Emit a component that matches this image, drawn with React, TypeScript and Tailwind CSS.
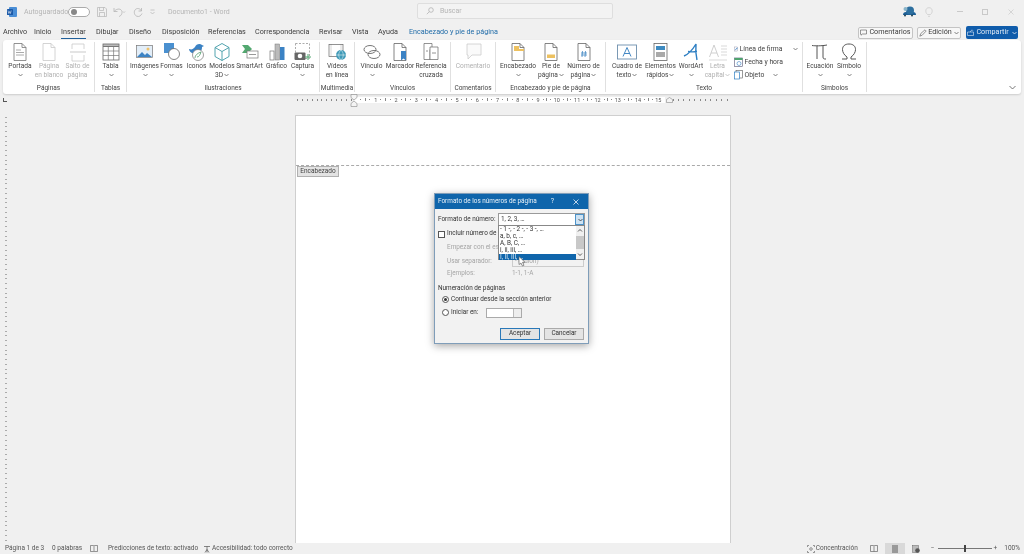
import React from "react";

type BtnProps = { w: number; icon: React.ReactNode; lines: string[]; chev?: boolean; inlineChev?: boolean; off?: boolean };

const Chev = ({ c = "#666" }: { c?: string }) => (
  <svg width="5" height="4" viewBox="0 0 5 4" className="inline-block ml-[1px] align-middle"><path d="M.5 1 2.500 3 4.500 1" fill="none" stroke={c} strokeWidth=".8" /></svg>
);

const Ic = ({ children, w = 20 }: { children: React.ReactNode; w?: number }) => (
  <svg width={w} height="20" viewBox={`0 0 ${w} 20`} fill="none">{children}</svg>
);

const Doc = ({ c = "#777" }: { c?: string }) => <path d="M4 1.500h8l4 4v13H4zM12 1.500v4h4" stroke={c} strokeWidth=".8" fill="#fff" />;

const icons = {
  portada: <Ic><Doc c="#777" /><path d="M6 8h5M6 10.500h8M6 13h8" stroke="#aaa" strokeWidth="1" /></Ic>,
  blanco: <Ic><Doc c="#c9c9c9" /></Ic>,
  salto: <Ic><path d="M4 7V2h12v5M4 13v6h12v-6" stroke="#c9c9c9" strokeWidth=".8" /><path d="M2 10h16" stroke="#c9c9c9" strokeWidth="1" /></Ic>,
  tabla: <Ic><rect x="2" y="2" width="16" height="16" fill="#fff" stroke="#666" strokeWidth=".8" /><path d="M2 3h16M2 4.500h16" stroke="#777" strokeWidth="1.200" /><path d="M2 9h16M2 13.500h16M7.300 4v14M12.600 4v14" stroke="#777" strokeWidth=".7" /></Ic>,
  imagen: <Ic><rect x="1.500" y="3.500" width="16" height="12" fill="#e3eef8" stroke="#777" strokeWidth=".7" /><path d="M2 15l5-5 3 3 2-2 5 4z" fill="#3c83c4" /><circle cx="13" cy="7" r="1.500" fill="#f0c26a" /></Ic>,
  formas: <Ic><rect x="2" y="1" width="10" height="10" fill="#4a90d0" /><circle cx="12" cy="12" r="5.500" fill="#fff" stroke="#666" strokeWidth=".8" /></Ic>,
  iconos: <Ic><path d="M2 7c3 1 4 0 6-2 1-3 5-4 7-2l2 1-2 1c0 4-2 6-5 7-4 0-8-2-8-5z" fill="#3b82c4" /><circle cx="11" cy="13" r="5.500" fill="#fff" stroke="#777" strokeWidth=".7" /><path d="M8 16c0-3 3-5 6-6-1 3-2 5-4 5" stroke="#4f9d6c" strokeWidth=".8" /></Ic>,
  modelos: <Ic><path d="M10 1.500 17 5.500v9l-7 4-7-4v-9zM3 5.500l7 4 7-4M10 9.500v9" stroke="#3f9aa6" strokeWidth=".9" /></Ic>,
  smartart: <Ic><path d="M2 3h6l4 4-4 4H2l3-4z" fill="#53a870" /><rect x="7" y="9" width="11" height="7" fill="#fff" stroke="#777" strokeWidth=".7" /><path d="M9 12.500h7" stroke="#999" /></Ic>,
  grafico: <Ic><rect x="3" y="9" width="4" height="9" fill="#fff" stroke="#777" strokeWidth=".7" /><rect x="8" y="2" width="4.500" height="16" fill="#bbb" stroke="#777" strokeWidth=".5" /><rect x="13" y="5" width="4.500" height="13" fill="#3b82c4" /></Ic>,
  captura: <Ic><rect x="2.500" y="1.500" width="14" height="15" stroke="#888" strokeWidth=".7" strokeDasharray="2 1.500" /><rect x="1.500" y="10.500" width="11" height="7.500" rx="1" fill="#666" /><circle cx="7" cy="14" r="2.300" fill="#fff" /><path d="M15 12v6M12 15h6" stroke="#4fa56e" strokeWidth="1" /></Ic>,
  video: <Ic><rect x="2" y="2.500" width="14" height="12" fill="#fff" stroke="#666" strokeWidth=".7" /><path d="M4 2.500v12M14 2.500v12" stroke="#666" strokeWidth=".5" strokeDasharray="1 1" /><circle cx="14" cy="13" r="5" fill="#3f9ab8" /><path d="M9 13h10M14 8c-3 3-3 7 0 10M14 8c3 3 3 7 0 10" stroke="#fff" strokeWidth=".5" /></Ic>,
  vinculo: <Ic><ellipse cx="8" cy="7.500" rx="6" ry="4" stroke="#666" strokeWidth=".9" /><ellipse cx="12" cy="12.500" rx="6" ry="4" stroke="#666" strokeWidth=".9" /></Ic>,
  marcador: <Ic><Doc c="#666" /><path d="M11 9h5v9.500l-2.500-2-2.500 2z" fill="#3b82c4" /></Ic>,
  referencia: <Ic><path d="M3 1.500h8v6H9v10H3z" fill="#fff" stroke="#666" strokeWidth=".7" /><path d="M9 5h8v12.500H9z" fill="#fff" stroke="#666" strokeWidth=".7" /><path d="M11 11h4M5 9h2" stroke="#777" strokeWidth=".8" /></Ic>,
  comentario: <Ic><path d="M4 2h14v11H9l-4 4v-4H4z" fill="#fafafa" stroke="#ccc" strokeWidth=".8" /></Ic>,
  encabezado: <Ic><Doc c="#666" /><path d="M6 4h5v3h5v2H6z" fill="#edc160" /></Ic>,
  pie: <Ic><Doc c="#666" /><rect x="6" y="12.500" width="8" height="3.500" fill="#edc160" /></Ic>,
  numero: <Ic><Doc c="#666" /><path d="M8.500 9 8 15M11.500 9 11 15M7 11h6M7 13h6" stroke="#2f7bbd" strokeWidth=".7" /></Ic>,
  cuadro: <Ic w={24}><rect x="2.500" y="3" width="19" height="14" fill="#fff" stroke="#6d8fad" strokeWidth=".9" /><path d="M8 14.500 12 5.500l4 9M9.300 11.500h5.400" stroke="#2f7bbd" strokeWidth=".9" /></Ic>,
  elementos: <Ic><rect x="3" y="1.500" width="13" height="17" fill="#fff" stroke="#666" strokeWidth=".8" /><rect x="5" y="4" width="9" height="4" fill="#3d8ac0" /><rect x="5" y="10" width="9" height="5" fill="#a9a9a9" /></Ic>,
  wordart: <Ic><path d="M3 14C8 12 12 7 15 2c-.5 5-.5 10 1 16M7 9.500c3 .5 6 .5 9 0" stroke="#2e7fc3" strokeWidth="1.400" /></Ic>,
  letra: <Ic><path d="M1.500 15 6 3l4.500 12M3 11h6" stroke="#c9c9c9" strokeWidth=".9" /><path d="M13 4h6M13 7h6M13 10h6M13 13h6" stroke="#c9c9c9" strokeWidth=".7" /><path d="M1 18h18" stroke="#c9c9c9" strokeWidth=".7" /></Ic>,
  pi: <Ic w={18}><path d="M1 3.500c3 .5 10 .5 15-.5M6 3.500V17M12 3.500V15c0 2 1 2 3 2" stroke="#555" strokeWidth="1" /></Ic>,
  omega: <Ic w={18}><path d="M2 17h5v-2C4 13 2.500 10 2.500 7.500 2.500 4 5 2 9 2s6.500 2 6.500 5.500c0 2.500-1.500 5.500-4.500 7.500v2h5" stroke="#555" strokeWidth="1" /></Ic>,
};

const Btn = ({ w, icon, lines, chev, inlineChev, off }: BtnProps) => (
  <div className={`flex flex-col items-center shrink-0 ${off ? "text-[#b0b0b0]" : "text-[#444444]"}`} style={{ width: w }}>
    <div className="h-[20px] flex items-center justify-center">{icon}</div>
    <div className="text-[6.600px] leading-[8.700px] text-center whitespace-nowrap">
      {lines.map((l, i) => (
        <div key={i}>{l}{inlineChev && i === lines.length - 1 && <Chev c={off ? "#bbb" : "#666"} />}</div>
      ))}
      {chev && <div className="h-[8.700px] flex items-center justify-center"><Chev /></div>}
    </div>
  </div>
);

const Group = ({ w, label, children }: { w: number; label: string; children: React.ReactNode }) => (
  <div className="h-[50px] mt-[2px] flex flex-col shrink-0 border-r border-[#e0e0e0]" style={{ width: w }}>
    <div className="h-[39px] flex justify-center">{children}</div>
    <div className="h-[11px] text-center text-[6.500px] leading-[15px] text-[#444] whitespace-nowrap">{label}</div>
  </div>
);

const tabs: [string, number][] = [["Archivo", 31], ["Inicio", 27], ["Insertar", 35], ["Dibujar", 33], ["Diseño", 33], ["Disposición", 46], ["Referencias", 47], ["Correspondencia", 64], ["Revisar", 33], ["Vista", 26], ["Ayuda", 31]];

const SmallRow = ({ icon, label, chevGap }: { icon: React.ReactNode; label: string; chevGap?: number }) => (
  <div className="flex items-center gap-[2px] h-[14px] text-[6.800px] text-[#444444] whitespace-nowrap">
    {icon}<span>{label}</span>
    {chevGap !== undefined && <span style={{ marginLeft: chevGap }}><Chev /></span>}
  </div>
);

const Ticks = ({ n, w }: { n: number; w: number }) => (
  <div className="h-[6px] relative bottom-[5px] flex items-center justify-around" style={{ width: w }}>
    {Array.from({ length: n }).map((_, i) => <span key={i} className="w-[1px] h-[2px] bg-[#888]" />)}
  </div>
);

const Ruler = () => (
  <div className="h-[21px] shrink-0 flex items-center relative">
    <div className="absolute left-[3px] top-[4px] w-[4px] h-[4px] border-l border-b border-[#555]" />
    <div className="ml-[295px]"><Ticks n={12} w={59} /></div>
    <div className="w-[311px] h-[6px] bg-white relative bottom-[5px] flex overflow-hidden pl-[3px]">
      {Array.from({ length: 15 }).map((_, i) => (
        <div key={i} className="w-[20.300px] shrink-0 flex items-center justify-between pl-[3px] text-[5.500px] leading-[6px] text-[#555]">
          <span className="w-[1px] h-[1px] bg-[#888]" /><span className="w-[1px] h-[3px] bg-[#888]" /><span className="w-[1px] h-[1px] bg-[#888]" /><span>{i + 1}</span>
        </div>
      ))}
    </div>
    <Ticks n={12} w={65} />
    <svg width="8" height="13" viewBox="0 0 8 13" className="absolute left-[350px] top-0"><path d="M1 .5h6v3L4 6 1 3.500zM1 12.500h6V9.500L4 7 1 9.500z" fill="#f4f4f4" stroke="#888" strokeWidth=".6" /></svg>
    <svg width="7" height="6" viewBox="0 0 7 6" className="absolute left-[666px] top-[3px]"><path d="M.5 5.500h6v-3L3.500.5.5 2.500z" fill="#f4f4f4" stroke="#888" strokeWidth=".6" /></svg>
  </div>
);

const Dialog = () => (
  <div className="absolute left-[434px] top-[193px] w-[155px] h-[151px] bg-[#f2f2f2] border border-[#7f9db9] shadow-[0_2px_8px_rgba(0,0,0,0.35)] text-[6.400px] text-[#333] whitespace-nowrap">
    <div className="h-[15px] bg-[#0f65ab] text-[#e8f1f8] flex items-center pl-[3px] pr-[9px]">
      <span className="flex-1">Formato de los números de página</span>
      <span className="mr-[19px] text-[7px]">?</span>
      <svg width="6" height="6" viewBox="0 0 6 6"><path d="M.5.5l5 5M5.500.5l-5 5" stroke="#e8f1f8" strokeWidth=".8" /></svg>
    </div>
    <div className="relative px-[3px] pt-[4px]">
      <div className="flex items-center h-[13px]">
        <span className="w-[60px]">Formato de número:</span>
        <div className="w-[87px] h-[13px] bg-white border border-[#9a9a9a] flex items-center pl-[2px] justify-between">
          <span>1, 2, 3, …</span>
          <span className="w-[9px] h-[11px] bg-[#cfe3f3] border border-[#4d93c9] flex items-center justify-center"><Chev c="#333" /></span>
        </div>
      </div>
      <div className="flex items-center gap-[2px] h-[12px] mt-[2px]">
        <span className="w-[7px] h-[7px] bg-white border border-[#555]" />
        <span>Incluir número de</span>
      </div>
      <div className="pl-[9px] text-[#a5a5a5]">
        <div className="h-[14px] mt-[1px] flex items-center">Empezar con el est</div>
        <div className="h-[13px] flex items-center">
          <span className="w-[65px] shrink-0">Usar separador:</span>
          <span className="w-[72px] h-[10px] border border-[#ccc] pl-[2px] flex items-center">- (guión)</span>
        </div>
        <div className="h-[11px] flex items-center">
          <span className="w-[65px] shrink-0">Ejemplos:</span><span>1-1, 1-A</span>
        </div>
      </div>
      <div className="mt-[5px] h-[9px] flex items-center">Numeración de páginas</div>
      <div className="flex items-center gap-[2px] h-[11px] mt-[1px] pl-[4px]">
        <span className="w-[7px] h-[7px] rounded-full bg-white border border-[#555] flex items-center justify-center"><span className="w-[3px] h-[3px] rounded-full bg-[#333]" /></span>
        <span>Continuar desde la sección anterior</span>
      </div>
      <div className="flex items-center gap-[2px] h-[11px] mt-[2px] pl-[4px]">
        <span className="w-[7px] h-[7px] rounded-full bg-white border border-[#555]" />
        <span className="w-[33px]">Iniciar en:</span>
        <span className="w-[36px] h-[10px] bg-white border border-[#aaa] flex justify-end"><span className="w-[8px] h-full bg-[#eee] border-l border-[#bbb]" /></span>
      </div>
      <div className="flex justify-end gap-[4px] mt-[10px] pr-[1px]">
        <span className="w-[40px] h-[12px] bg-[#e4e4e4] border-[1.500px] border-[#2a78b8] flex items-center justify-center">Aceptar</span>
        <span className="w-[40px] h-[12px] bg-[#e4e4e4] border border-[#aaa] flex items-center justify-center">Cancelar</span>
      </div>
      <div className="absolute left-[63px] top-[16px] w-[87px] h-[35px] bg-white border border-[#888]">
        <div className="pl-[1px] h-[7px] leading-[7px]">- 1 -, - 2 -, - 3 -, …</div>
        <div className="pl-[1px] h-[7px] leading-[7px]">a, b, c, …</div>
        <div className="pl-[1px] h-[7px] leading-[7px]">A, B, C, …</div>
        <div className="pl-[1px] h-[7px] leading-[7px]">i, ii, iii, …</div>
        <div className="pl-[1px] h-[6px] leading-[6px] bg-[#0f65ab] text-[#dbe8f3] w-[77px]">I, II, III, …</div>
        <div className="absolute right-0 top-0 bottom-0 w-[8px] bg-[#f0f0f0] flex flex-col items-center">
          <svg width="6" height="5" viewBox="0 0 6 5" className="mt-[2px]"><path d="M1 3.500 3 1.500 5 3.500" fill="none" stroke="#333" strokeWidth=".8" /></svg>
          <span className="w-full h-[13px] mt-[3px] bg-[#c8c8c8]" />
          <svg width="6" height="5" viewBox="0 0 6 5" className="mt-[3px]"><path d="M1 1.500 3 3.500 5 1.500" fill="none" stroke="#333" strokeWidth=".8" /></svg>
        </div>
      </div>
      <svg width="8" height="11" viewBox="0 0 8 11" className="absolute left-[83px] top-[47px]"><path d="M1 .5v8l2-1.500 1.500 3 1.500-.7-1.500-3H7z" fill="#fff" stroke="#555" strokeWidth=".6" /></svg>
    </div>
  </div>
);

export default function App() {
  return (
    <div className="relative w-[1024px] h-[554px] overflow-hidden bg-[#f0f0f0] flex flex-col blur-[0.4px]" style={{ fontFamily: 'Roboto,"Noto Sans",sans-serif' }}>
      {/* Title bar */}
      <div className="h-[24px] shrink-0 flex items-center relative text-[7px] text-[#b5b5b5]">
        <svg width="10" height="10" viewBox="0 0 10 10" className="ml-[7px]"><rect x="2" y="0" width="8" height="10" rx="1" fill="#4a8ed6" /><rect y="2" width="6" height="6" rx=".6" fill="#1c5aa8" /><path d="M1 3.500l.8 3 .8-2 .8 2 .8-3" stroke="#fff" strokeWidth=".5" fill="none" /></svg>
        <span className="ml-[7px] w-[44px]">Autoguardado</span>
        <span className="w-[22px] h-[10px] rounded-full border border-[#aaa] bg-white flex items-center pl-[2px]"><span className="w-[6px] h-[6px] rounded-full bg-[#888]" /></span>
        <svg width="10" height="10" viewBox="0 0 10 10" className="ml-[7px]"><path d="M.5.5h7.500l1.500 1.500v7.500H.5zM2.500.5v3h4v-3M2.500 9.500v-4h5v4" fill="none" stroke="#b5b5b5" strokeWidth=".7" /></svg>
        <svg width="13" height="10" viewBox="0 0 13 10" className="ml-[6px]"><path d="M1 1v3.500h3.500M1 4.500C3 2 7 1 8.500 3.500 10 6 8 9 6 9.500M10 4.500l1 1 1-1" fill="none" stroke="#b5b5b5" strokeWidth=".8" /></svg>
        <svg width="10" height="10" viewBox="0 0 10 10" className="ml-[7px]"><path d="M8.500 1v3h-3M8.500 4C7 1 3.500.8 2 3S1.500 8.500 4 9.300 8 8.500 9 6.500" fill="none" stroke="#b5b5b5" strokeWidth=".8" /></svg>
        <svg width="5" height="6" viewBox="0 0 5 6" className="ml-[7px]"><path d="M.5 1h4M.5 3 2.500 5 4.500 3" fill="none" stroke="#b5b5b5" strokeWidth=".7" /></svg>
        <span className="ml-[13px]">Documento1 - Word</span>
        <div className="absolute left-[417px] top-[3px] w-[196px] h-[16px] bg-[#f3f3f3] border border-[#dedede] rounded-[2px] flex items-center pl-[8px] gap-[6px]">
          <svg width="8" height="8" viewBox="0 0 8 8"><circle cx="5" cy="3" r="2.300" fill="none" stroke="#aaa" strokeWidth=".7" /><path d="M3.300 4.700.8 7.200" stroke="#aaa" strokeWidth=".7" /></svg>
          <span>Buscar</span>
        </div>
        <div className="absolute right-[10px] top-[6px] flex items-center">
          <svg width="14" height="11" viewBox="0 0 14 11"><path d="M1 9c0-2 1-3 3-3h7c2 0 3 1 3 3z" fill="#1d5f96" /><circle cx="8" cy="4.500" r="4" fill="#2d6f9f" /><circle cx="3.500" cy="3" r="2" fill="#8ab4c9" /><circle cx="3" cy="9.500" r="1" fill="#245" /><circle cx="10" cy="9.500" r="1" fill="#245" /></svg>
          <svg width="8" height="10" viewBox="0 0 8 10" className="ml-[9px]"><path d="M2.500 7.500C1.500 6.500.8 5.500.8 4 .8 2 2 .7 4 .7S7.200 2 7.200 4c0 1.500-.7 2.500-1.700 3.500zM3 9.300h2" fill="none" stroke="#c9c9c9" strokeWidth=".7" /></svg>
          <span className="ml-[24px] w-[6px] h-[1px] bg-[#c9c9c9]" />
          <span className="ml-[19px] w-[6px] h-[6px] border border-[#c9c9c9]" />
          <svg width="6" height="6" viewBox="0 0 6 6" className="ml-[20px]"><path d="M.5.5l5 5M5.500.5l-5 5" stroke="#c9c9c9" strokeWidth=".7" /></svg>
        </div>
      </div>

      {/* Tabs */}
      <div className="h-[16px] shrink-0 relative flex items-center pl-[3px] text-[7.200px] text-[#3c3c3c] pt-[1px]">
        {tabs.map(([t, w]) => (
          <span key={t} className="relative whitespace-nowrap shrink-0" style={{ width: w }}>
            <span className="relative inline-block">
              {t}
              {t === "Insertar" && <span className="absolute left-0 right-0 bottom-[-1px] h-[1px] bg-[#1f5f9a]" />}
            </span>
          </span>
        ))}
        <span className="text-[#1f6ba8] whitespace-nowrap">Encabezado y pie de página</span>
        <div className="absolute right-[6px] top-[2px] flex items-center gap-[4px] text-[7.200px]">
          <span className="w-[55px] h-[12px] bg-[#f7f7f7] border border-[#c4c4c4] rounded-[2px] flex items-center justify-center gap-[2px]">
            <svg width="7" height="7" viewBox="0 0 7 7"><path d="M.5 1h6v4H2.500L1 6.200V5H.5z" fill="none" stroke="#555" strokeWidth=".6" /></svg>Comentarios
          </span>
          <span className="w-[44px] h-[12px] bg-[#f7f7f7] border border-[#c4c4c4] rounded-[2px] flex items-center justify-center gap-[1px]">
            <svg width="8" height="8" viewBox="0 0 8 8"><path d="M.8 7.200l1-2.700L6 .8l1.200 1.200-4 4.200z" fill="none" stroke="#555" strokeWidth=".6" /></svg>Edición<Chev />
          </span>
          <span className="ml-[1px] w-[52px] h-[13px] bg-[#0f5cab] text-[#dfeaf5] rounded-[2px] flex items-center justify-center gap-[2px]">
            <svg width="7" height="7" viewBox="0 0 7 7"><path d="M.5 3h6v3.500h-6zM3 3 5 .8l1 1" fill="none" stroke="#dfeaf5" strokeWidth=".6" /></svg>Compartir<Chev c="#dfeaf5" />
          </span>
        </div>
      </div>

      {/* Ribbon */}
      <div className="mx-[3px] h-[54px] shrink-0 bg-white rounded-[3px] shadow-[0_1px_2px_rgba(0,0,0,0.15)] flex relative">
        <Group w={92} label="Páginas">
          <Btn w={29} icon={icons.portada} lines={["Portada"]} chev />
          <Btn w={29} icon={icons.blanco} lines={["Página", "en blanco"]} off />
          <Btn w={28} icon={icons.salto} lines={["Salto de", "página"]} off />
        </Group>
        <Group w={32} label="Tablas"><Btn w={28} icon={icons.tabla} lines={["Tabla"]} chev /></Group>
        <Group w={193} label="Ilustraciones">
          <Btn w={28} icon={icons.imagen} lines={["Imágenes"]} chev />
          <Btn w={26} icon={icons.formas} lines={["Formas"]} chev />
          <Btn w={24} icon={icons.iconos} lines={["Iconos"]} />
          <Btn w={27} icon={icons.modelos} lines={["Modelos", "3D"]} inlineChev />
          <Btn w={28} icon={icons.smartart} lines={["SmartArt"]} />
          <Btn w={26} icon={icons.grafico} lines={["Gráfico"]} />
          <Btn w={26} icon={icons.captura} lines={["Captura"]} chev />
        </Group>
        <Group w={35} label="Multimedia"><Btn w={30} icon={icons.video} lines={["Vídeos", "en línea"]} /></Group>
        <Group w={96} label="Vínculos">
          <Btn w={27} icon={icons.vinculo} lines={["Vínculo"]} chev />
          <Btn w={30} icon={icons.marcador} lines={["Marcador"]} />
          <Btn w={32} icon={icons.referencia} lines={["Referencia", "cruzada"]} />
        </Group>
        <Group w={45} label="Comentarios"><Btn w={36} icon={icons.comentario} lines={["Comentario"]} off /></Group>
        <Group w={110} label="Encabezado y pie de página">
          <Btn w={32} icon={icons.encabezado} lines={["Encabezado"]} chev />
          <Btn w={34} icon={icons.pie} lines={["Pie de", "página"]} inlineChev />
          <Btn w={31} icon={icons.numero} lines={["Número de", "página"]} inlineChev />
        </Group>
        <Group w={197} label="Texto">
          <Btn w={33} icon={icons.cuadro} lines={["Cuadro de", "texto"]} inlineChev />
          <Btn w={34} icon={icons.elementos} lines={["Elementos", "rápidos"]} inlineChev />
          <Btn w={27} icon={icons.wordart} lines={["WordArt"]} chev />
          <Btn w={26} icon={icons.letra} lines={["Letra", "capital"]} inlineChev off />
          <div className="w-[67px] shrink-0 pl-[3px] pt-[1px] flex flex-col">
            <SmallRow label="Línea de firma" chevGap={7} icon={<svg width="9" height="10" viewBox="0 0 9 10"><rect x=".5" y=".5" width="7" height="9" fill="#fff" stroke="#557" strokeWidth=".6" /><path d="M2 7 7 1.500 8.500 3 3 8z" fill="#3b82c4" /></svg>} />
            <SmallRow label="Fecha y hora" icon={<svg width="9" height="10" viewBox="0 0 9 10"><rect x=".5" y="1" width="8" height="8.500" fill="#fff" stroke="#557" strokeWidth=".6" /><rect x=".5" y="1" width="8" height="2" fill="#4fa56e" /><circle cx="5" cy="6.500" r="2" fill="none" stroke="#3b82c4" strokeWidth=".6" /></svg>} />
            <SmallRow label="Objeto" chevGap={6} icon={<svg width="9" height="10" viewBox="0 0 9 10"><rect x="2" y=".5" width="6.500" height="7.500" fill="#fff" stroke="#555" strokeWidth=".6" /><rect x=".5" y="2" width="5" height="7" fill="#fff" stroke="#2e7fc3" strokeWidth=".7" /></svg>} />
          </div>
        </Group>
        <Group w={64} label="Símbolos">
          <Btn w={29} icon={icons.pi} lines={["Ecuación"]} chev />
          <Btn w={29} icon={icons.omega} lines={["Símbolo"]} chev />
        </Group>
        <svg width="7" height="5" viewBox="0 0 7 5" className="absolute right-[5px] bottom-[4px]"><path d="M.5 1 3.500 4 6.500 1" fill="none" stroke="#555" strokeWidth=".8" /></svg>
      </div>

      <Ruler />

      {/* Document area */}
      <div className="flex-1 min-h-0 flex relative">
        <div className="absolute left-[5px] top-0 bottom-0 w-[2px] flex flex-col justify-around">
          {Array.from({ length: 90 }).map((_, i) => <span key={i} className="h-[1px] w-[2px] bg-[#aaa]" />)}
        </div>
        <div className="ml-[295px] w-[436px] h-full bg-white border-x border-t border-[#cfcfcf] relative">
          <div className="mt-[49px] border-t border-dashed border-[#aaaaaa]" />
          <div className="ml-[1px] w-[42px] h-[11px] bg-[#e3e3e3] border border-[#b0b0b0] text-[6.500px] text-[#444] flex items-center justify-center">Encabezado</div>
        </div>
      </div>

      {/* Status bar */}
      <div className="h-[11px] shrink-0 flex items-center relative text-[6.500px] text-[#555] bg-[#f0f0f0]">
        <span className="ml-[5px] w-[47px]">Página 1 de 3</span>
        <span className="w-[38px]">0 palabras</span>
        <svg width="8" height="7" viewBox="0 0 8 7"><path d="M.5.5h3l.5.5.5-.5h3v6h-3L4 7l-.5-.5h-3zM4 1v5.500" fill="none" stroke="#555" strokeWidth=".6" /></svg>
        <span className="ml-[10px] w-[95px]">Predicciones de texto: activado</span>
        <svg width="8" height="8" viewBox="0 0 8 8"><path d="M1 1.500h6M4 1.500v6M2 7.500l2-3 2 3" fill="none" stroke="#555" strokeWidth=".7" /></svg>
        <span className="ml-[1px]">Accesibilidad: todo correcto</span>
        <div className="absolute right-[4px] top-0 h-full flex items-center">
          <svg width="8" height="8" viewBox="0 0 8 8"><path d="M.5 2V.5H2M6 .5h1.500V2M.5 6v1.500H2M6 7.500h1.500V6" fill="none" stroke="#555" strokeWidth=".6" /><circle cx="4" cy="4" r="1.300" fill="none" stroke="#555" strokeWidth=".6" /></svg>
          <span className="ml-[1px] w-[54px]">Concentración</span>
          <svg width="8" height="7" viewBox="0 0 8 7"><path d="M.5.5h3l.5.5.5-.5h3v6h-7zM4 1v5.500" fill="none" stroke="#666" strokeWidth=".7" /></svg>
          <span className="ml-[7px] w-[20px] h-[11px] bg-[#d9d9d9] flex items-center justify-center"><span className="w-[6px] h-[8px] bg-[#999]" /></span>
          <svg width="8" height="8" viewBox="0 0 8 8" className="ml-[7px]"><rect x=".5" y=".5" width="6" height="7" fill="#bbb" stroke="#666" strokeWidth=".5" /><circle cx="5.500" cy="5.500" r="2.300" fill="#555" /></svg>
          <span className="ml-[11px]">−</span>
          <span className="ml-[3px] w-[54px] h-[1px] bg-[#777] relative"><span className="absolute left-[26px] top-[-3px] w-[2px] h-[7px] bg-[#444]" /></span>
          <span className="ml-[2px]">+</span>
          <span className="ml-[7px]">100%</span>
        </div>
      </div>

      <Dialog />
    </div>
  );
}
